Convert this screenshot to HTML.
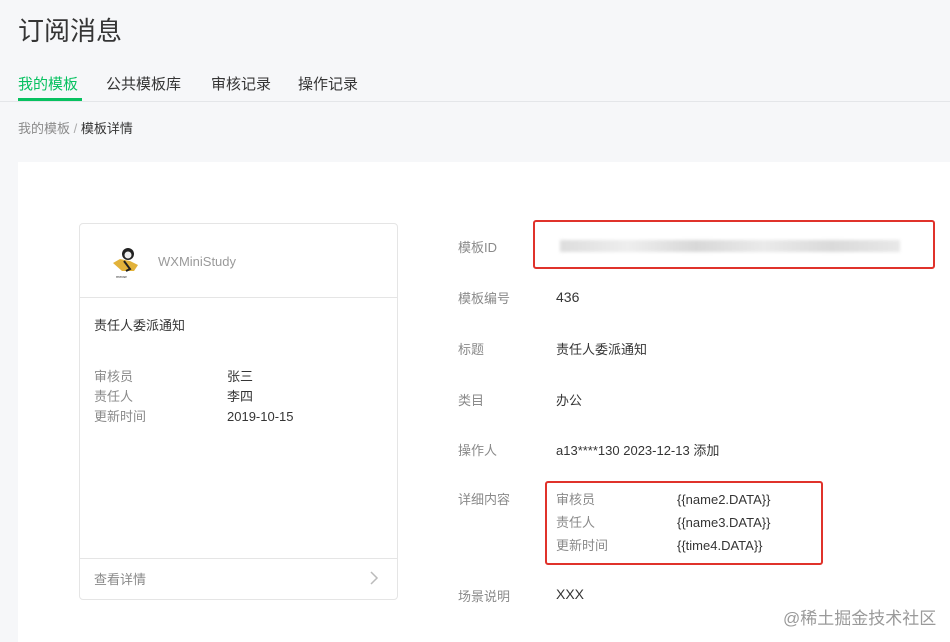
<!DOCTYPE html>
<html><head><meta charset="utf-8"><style>
*{margin:0;padding:0;box-sizing:border-box}
body{width:950px;height:636px;overflow:hidden;background:#f6f7f9;font-family:"Liberation Sans","Noto Sans CJK SC",sans-serif;position:relative;color:#353535}
.a{position:absolute;white-space:nowrap}
.g{color:#8a8a8a}
.f13{font-size:13px}
.f14{font-size:14px}
</style></head><body>
<div class="a" style="left:18px;top:11px;font-size:26px;color:#353535">订阅消息</div>
<div class="a f14" style="left:18px;top:73px;font-size:15px;color:#07c160">我的模板</div>
<div class="a" style="left:18px;top:98px;width:64px;height:3px;background:#07c160"></div>
<div class="a" style="left:106px;top:73px;font-size:15px">公共模板库</div>
<div class="a" style="left:211px;top:73px;font-size:15px">审核记录</div>
<div class="a" style="left:298px;top:73px;font-size:15px">操作记录</div>
<div class="a" style="left:0;top:101px;width:950px;height:1px;background:#e4e6e9"></div>
<div class="a f13" style="left:18px;top:118px"><span class="g">我的模板</span> <span style="color:#aaa">/</span> 模板详情</div>
<div class="a" style="left:18px;top:162px;width:932px;height:480px;background:#fff"></div>
<!-- card -->
<div class="a" style="left:79px;top:223px;width:319px;height:377px;border:1px solid #e5e5e5;border-radius:4px;background:#fff"></div>
<div class="a" style="left:79px;top:297px;width:319px;height:1px;background:#e5e5e5"></div>
<div class="a" style="left:79px;top:558px;width:319px;height:1px;background:#e5e5e5"></div>
<svg class="a" style="left:110px;top:245px" width="32" height="34" viewBox="0 0 32 34">
<path d="M3 18 L10 14 L20 16 L28 20 L24 26 L12 26 Z" fill="#e2b23a"/>
<circle cx="18" cy="9" r="6" fill="#222"/><circle cx="18" cy="10" r="3.5" fill="#eee"/>
<path d="M14 16 L20 24 L16 26" stroke="#222" stroke-width="2" fill="none"/>
<text x="6" y="33" font-size="4" fill="#333">meow</text></svg>
<div class="a f13" style="left:158px;top:254px;color:#9a9a9a">WXMiniStudy</div>
<div class="a f13" style="left:94px;top:315px">责任人委派通知</div>
<div class="a f13 g" style="left:94px;top:367px;line-height:20px">审核员<br>责任人<br>更新时间</div>
<div class="a f13" style="left:227px;top:367px;line-height:20px">张三<br>李四<br>2019-10-15</div>
<div class="a f13 g" style="left:94px;top:569px">查看详情</div>
<svg class="a" style="left:369px;top:571px" width="10" height="14"><path d="M2 1 L8 7 L2 13" stroke="#bbb" stroke-width="1.5" fill="none"/></svg>
<!-- details -->
<div class="a f13 g" style="left:458px;top:237px">模板ID</div>
<div class="a" style="left:533px;top:220px;width:402px;height:49px;border:2px solid #e0322b;border-radius:3px"></div>
<div class="a" style="left:560px;top:240px;width:340px;height:12px;background:linear-gradient(90deg,#ddd,#eee 20%,#d8d8d8 40%,#eaeaea 60%,#dadada 80%,#e8e8e8);filter:blur(1.5px)"></div>
<div class="a f13 g" style="left:458px;top:288px">模板编号</div>
<div class="a f14" style="left:556px;top:289px">436</div>
<div class="a f13 g" style="left:458px;top:339px">标题</div>
<div class="a f13" style="left:556px;top:339px">责任人委派通知</div>
<div class="a f13 g" style="left:458px;top:390px">类目</div>
<div class="a f13" style="left:556px;top:390px">办公</div>
<div class="a f13 g" style="left:458px;top:440px">操作人</div>
<div class="a f13" style="left:556px;top:440px">a13****130 2023-12-13 添加</div>
<div class="a f13 g" style="left:458px;top:489px">详细内容</div>
<div class="a" style="left:545px;top:481px;width:278px;height:84px;border:2px solid #e0322b;border-radius:3px"></div>
<div class="a f13 g" style="left:556px;top:488px;line-height:23px">审核员<br>责任人<br>更新时间</div>
<div class="a f13" style="left:677px;top:488px;line-height:23px">{{name2.DATA}}<br>{{name3.DATA}}<br>{{time4.DATA}}</div>
<div class="a f13 g" style="left:458px;top:586px">场景说明</div>
<div class="a f14" style="left:556px;top:586px">XXX</div>
<div class="a" style="left:783px;top:604px;font-size:17px;color:#9a9a9a">@稀土掘金技术社区</div>
</body></html>
